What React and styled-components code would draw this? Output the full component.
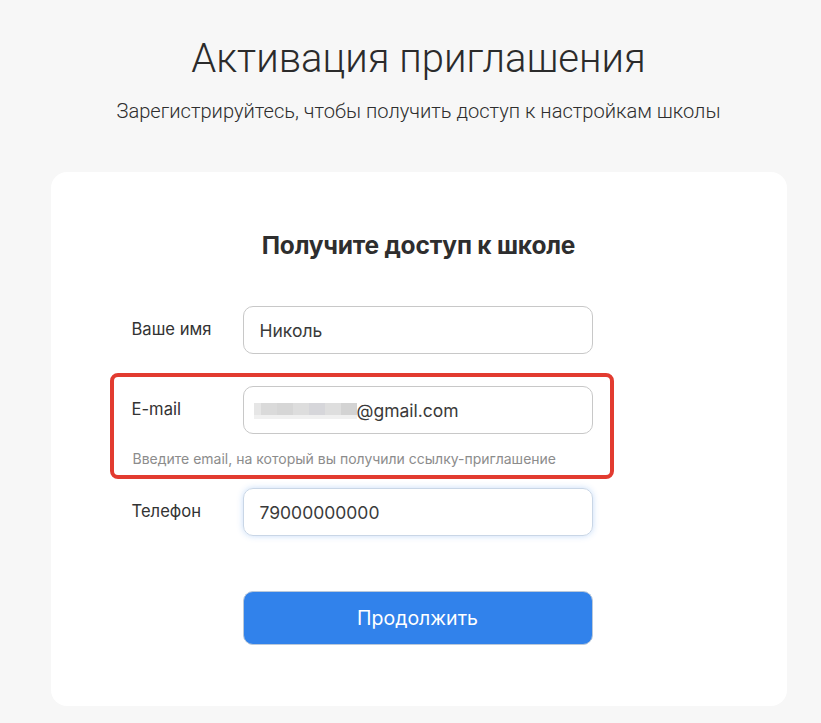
import styled, { createGlobalStyle } from 'styled-components'

const Global = createGlobalStyle`
  html, body {
    margin: 0;
    padding: 0;
    background: #f7f7f7;
  }
  * { box-sizing: border-box; }
`

const fields = [
  { label: 'Ваше имя', value: 'Николь' },
]

function App() {
  return (
  <>
    <Global />
    <Page>
      <Title>Активация приглашения</Title>
      <Subtitle>Зарегистрируйтесь, чтобы получить доступ к настройкам школы</Subtitle>
      <Card>
        <CardTitle>Получите доступ к школе</CardTitle>
        <Form>
          {fields.map((f) => (
            <Row key={f.label}>
              <Label>{f.label}</Label>
              <Field>{f.value}</Field>
            </Row>
          ))}
          <Highlight>
            <Row>
              <Label>E-mail</Label>
              <Field>
                <Blur>
                  {blurShades.map((c, i) => (
                    <BlurCell key={i} $color={c} />
                  ))}
                </Blur>
                @gmail.com
              </Field>
            </Row>
            <Hint>Введите email, на который вы получили ссылку-приглашение</Hint>
          </Highlight>
          <Row>
            <Label>Телефон</Label>
            <Field $focused>79000000000</Field>
          </Row>
          <Button>Продолжить</Button>
        </Form>
      </Card>
    </Page>
  </>
  );
}

export default App;

const blurShades = ['#e6e6e6', '#dadada', '#d6d6d6', '#dddddd', '#d6d6da', '#dedede', '#d3d3d3']

const Page = styled.div`
  min-height: 723px;
  display: flex;
  flex-direction: column;
  align-items: center;
  padding-top: 33px;
  padding-left: 16px;
  font-family: Inter, "Noto Sans", sans-serif;
  color: #333;
`

const Title = styled.h1`
  margin: 0;
  font-family: Roboto, sans-serif;
  font-weight: 300;
  font-size: 40px;
  line-height: 52px;
  color: #2b2b2b;
`

const Subtitle = styled.p`
  margin: 14px 0 0;
  font-family: Roboto, sans-serif;
  font-weight: 300;
  font-size: 20.1px;
  line-height: 24px;
  color: #2e2e2e;
`

const Card = styled.div`
  margin-top: 49px;
  width: 736px;
  height: 534px;
  background: #fff;
  border-radius: 16px;
  padding-top: 58px;
  display: flex;
  flex-direction: column;
  align-items: center;
`

const CardTitle = styled.h2`
  margin: 0;
  font-size: 24.5px;
  line-height: 30px;
  font-weight: 700;
  color: #2e2e2e;
  letter-spacing: -0.2px;
`

const Form = styled.div`
  width: 574px;
  margin-top: 46px;
  display: flex;
  flex-direction: column;
`

const Row = styled.div`
  display: grid;
  grid-template-columns: 111px 350px;
  align-items: center;
`

const Label = styled.span`
  font-size: 16.6px;
  color: #333;
  margin-top: -2px;
`

const Field = styled.div`
  height: 48px;
  border-radius: 10px;
  border: 1px solid ${(p) => (p.$focused ? '#c9d6e6' : '#c8c8c8')};
  box-shadow: ${(p) => (p.$focused ? '0 0 6px rgba(49, 130, 235, 0.28)' : 'none')};
  display: flex;
  align-items: center;
  padding-left: 16px;
  font-size: 17.5px;
  color: #3a3a3a;
`

const Blur = styled.span`
  display: inline-flex;
  height: 16px;
  margin-left: -6px;
  margin-top: 2px;
`

const BlurCell = styled.span`
  width: 16px;
  height: 16px;
  background: linear-gradient(${(p) => p.$color} 0 75%, #f0f0f0 75%);
  &:first-child { width: 7px; }
`

const Highlight = styled.div`
  margin: 19px 0 9px -22px;
  width: 504px;
  border: 4px solid #e23b30;
  border-radius: 8px;
  padding: 9px 0 7px 18px;
`

const Hint = styled.div`
  margin-top: 16px;
  font-size: 14px;
  line-height: 18px;
  color: #8c8c8c;
  padding-left: 1px;
`

const Button = styled.button`
  margin: 55px 0 0 111px;
  width: 350px;
  height: 54px;
  border: 1px solid #b9c8da;
  border-radius: 10px;
  background: #3182eb;
  color: #fff;
  font-family: Inter, "Noto Sans", sans-serif;
  font-size: 19.5px;
  cursor: pointer;
`
